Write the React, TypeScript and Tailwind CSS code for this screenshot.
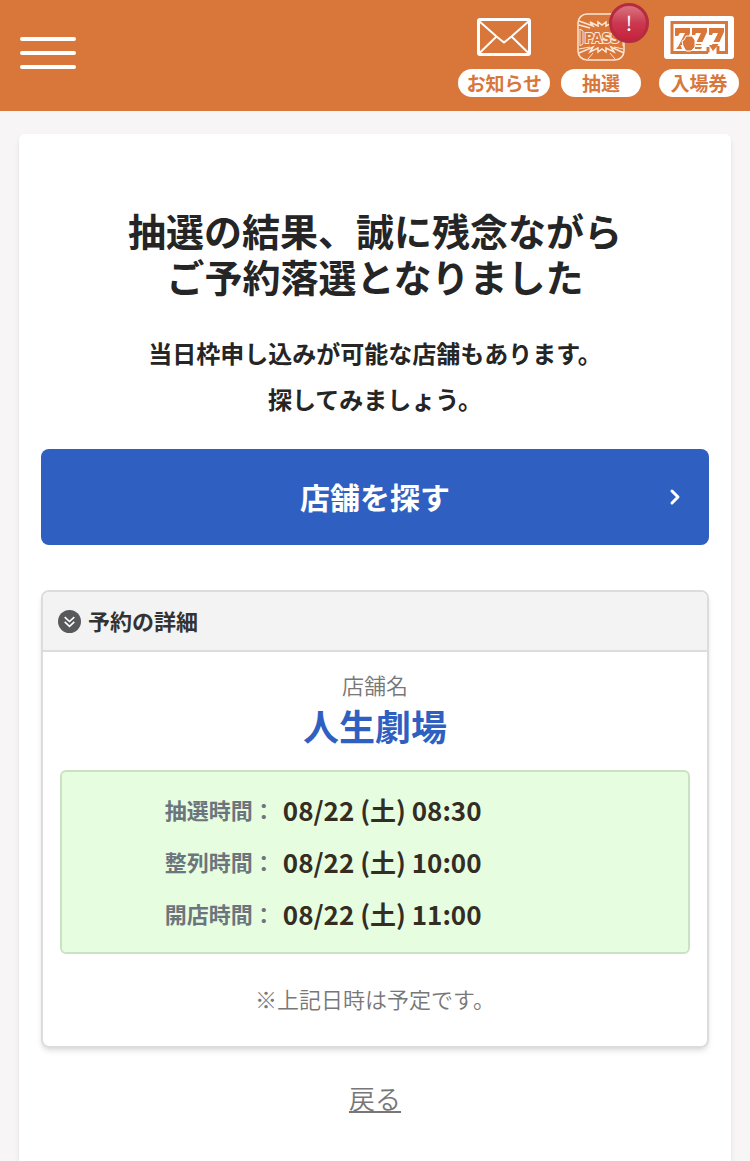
import type { ReactNode } from 'react'
import { ChevronRight } from 'lucide-react'

const schedule = [
  { label: '抽選時間', value: '08/22 (土) 08:30' },
  { label: '整列時間', value: '08/22 (土) 10:00' },
  { label: '開店時間', value: '08/22 (土) 11:00' },
]

function MailIcon() {
  return (
    <svg width="54" height="38" viewBox="0 0 54 38" fill="none" stroke="#fff" strokeWidth="2" aria-hidden="true">
      <rect x="1.5" y="1.5" width="51" height="35" rx="1.5" strokeWidth="3" />
      <path d="M2 3l17.500 15.500 7.500 6 7.500-6L52 3M2 35.500l17.500-17M52 35.500l-17.500-17" />
    </svg>
  )
}

function PassIcon() {
  return (
    <svg width="48" height="48" viewBox="0 0 48 48" fill="none" stroke="#fde6d3" strokeWidth="1.500" aria-hidden="true">
      <rect x="1" y="1" width="46" height="46" rx="9" />
      <path d="M2 8l14 5-3-4 8 4v-4l4 3 4-3v4l8-4-3 4 13-5" />
      <path d="M2 12l11 3M46 12l-11 3" />
      <path d="M2 40l14-6-3 5 8-4v4l4-3 4 3v-4l8 4-3-5 13 6" />
      <path d="M2 36l11-2M46 36l-9-2M11 46l5-6M38 46l-5-6" strokeWidth="1" />
      <path d="M3 16v17l3-2V18zM46 16v17" strokeWidth="1" />
      <text
        x="25"
        y="30"
        textAnchor="middle"
        fontFamily="'DejaVu Sans Condensed', 'Liberation Sans', sans-serif"
        fontSize="14"
        fontWeight="700"
        fill="#d9773b"
        stroke="#fde6d3"
        strokeWidth="2"
        paintOrder="stroke"
      >
        PASS
      </text>
    </svg>
  )
}

function TicketIcon() {
  return (
    <svg width="70" height="43" viewBox="0 0 70 43" aria-hidden="true">
      <rect width="70" height="43" rx="3" fill="#fff" />
      <path
        d="M44 36.500H8V6.500h54.500v30H54V30M44 36.500V31"
        fill="none"
        stroke="#d9773b"
        strokeWidth="3"
      />
      <g fill="#d9773b">
        <path d="M11 12h15v5l-5 12h-6l6-12h-5l-2 3h-3z" />
        <path d="M28 12h15v4l-6 13h-6l6-12h-5l-1 2h-3z" />
        <path d="M45 12h15v4l-6 13h-6l6-12h-5l-1 2h-3z" />
        <path d="M12 33l4-5 2 5zM31 31h7l-1 2h-6zM45 29l4 6 5-6z" />
      </g>
      <path
        d="M18 25l2-1 2-4h6l3 4v7l-4 4h-5l-3-5z"
        fill="#d9773b"
        stroke="#fff"
        strokeWidth="1"
      />
      <path d="M31 27h27" stroke="#fff" strokeWidth="2" />
    </svg>
  )
}

function DoubleChevronIcon() {
  return (
    <svg width="23" height="23" viewBox="0 0 24 24" aria-hidden="true">
      <circle cx="12" cy="12" r="12" fill="#58595b" />
      <path
        d="M7 7.500l5 4.500 5-4.500M7 12.500l5 4.500 5-4.500"
        fill="none"
        stroke="#fff"
        strokeWidth="1.700"
      />
    </svg>
  )
}

function NavItem({ label, badge, children }: { label: string; badge?: string; children: ReactNode }) {
  return (
    <a href="#" className="relative flex flex-col items-center gap-2">
      <span className="flex h-12 items-center">{children}</span>
      <span className="flex h-7 items-center rounded-full bg-white px-2 text-[19px] leading-7 font-bold text-[#d9773b]">
        <span className="min-w-16 text-center">{label}</span>
      </span>
      {badge && (
        <span className="absolute -top-2.5 -right-2 flex size-10 items-center justify-center rounded-full border-3 border-[#b52b40] bg-linear-to-b from-[#d9737f] via-[#ca3850] to-[#c8203b] text-xl leading-none text-white">
          {badge}
        </span>
      )}
    </a>
  )
}

function Header() {
  return (
    <header className="flex items-start justify-between bg-[#d9773b] pt-[13px] pr-[11px] pb-3.5 pl-5">
      <button type="button" aria-label="メニュー" className="mt-6 flex w-14 flex-col gap-2.5">
        <span className="h-1 w-full rounded-full bg-white" />
        <span className="h-1 w-full rounded-full bg-white" />
        <span className="h-1 w-full rounded-full bg-white" />
      </button>
      <nav className="flex">
        <NavItem label="お知らせ">
          <MailIcon />
        </NavItem>
        <div className="mr-[18px] ml-[11px]">
          <NavItem label="抽選" badge="!">
            <PassIcon />
          </NavItem>
        </div>
        <NavItem label="入場券">
          <TicketIcon />
        </NavItem>
      </nav>
    </header>
  )
}

function Details() {
  return (
    <section className="mt-[45px] overflow-hidden rounded-lg border-2 border-[#dcdcdc] text-center shadow-md">
      <h2 className="flex h-15 items-center gap-[7px] border-b-2 border-[#dcdcdc] bg-[#f3f3f3] px-[15px] text-[22px] font-bold text-[#333]">
        <DoubleChevronIcon />
        <span className="pb-0.5">予約の詳細</span>
      </h2>
      <div className="px-[17px] pt-4 pb-8">
        <p className="text-[22px] leading-8 font-[350] text-[#777]">店舗名</p>
        <p className="text-[36px] leading-[50px] font-bold text-[#2f5fc1]">人生劇場</p>
        <dl className="mt-5 rounded-md border-2 border-[#cbe2c2] bg-[#e7fde0] py-3">
          {schedule.map(({ label, value }) => (
            <div key={label} className="grid grid-cols-[34%_1fr] items-center gap-2 leading-[52px]">
              <dt className="pb-0.5 text-right text-[22px] leading-[50px] font-bold text-[#6c757d]">{label}：</dt>
              <dd className="text-left text-[26px] font-bold text-[#332d24]">{value}</dd>
            </div>
          ))}
        </dl>
        <p className="mt-7 text-[22px] leading-8 font-[350] text-[#777]">※上記日時は予定です。</p>
      </div>
    </section>
  )
}

export default function App() {
  return (
    <div lang="ja" className="flex min-h-screen flex-col bg-[#f7f5f6] font-['Noto_Sans_CJK_JP',sans-serif] text-[#252525]">
      <Header />
      <main className="mx-[19px] mt-[23px] grow rounded-t-md bg-white px-[22px] pt-[73px] pb-11 text-center shadow-md">
        <h1 className="text-[38px] leading-[46px] font-bold">
          抽選の結果、誠に残念ながら
          <br />
          ご予約落選となりました
        </h1>
        <p className="mt-[31px] text-2xl leading-[46px] font-bold">
          当日枠申し込みが可能な店舗もあります。
          <br />
          探してみましょう。
        </p>
        <button
          type="button"
          className="mt-[27px] grid h-24 w-full grid-cols-[1fr_auto_1fr] items-center rounded-lg bg-[#2f5fc1] px-[22px] text-[30px] font-bold text-white"
        >
          <span className="col-start-2 pb-0.5">店舗を探す</span>
          <ChevronRight className="size-6 justify-self-end" strokeWidth={3} />
        </button>
        <Details />
        <p className="mt-[30px]">
          <a href="#" className="text-[26px] leading-10 font-[350] text-[#777] underline">
            戻る
          </a>
        </p>
      </main>
    </div>
  )
}
